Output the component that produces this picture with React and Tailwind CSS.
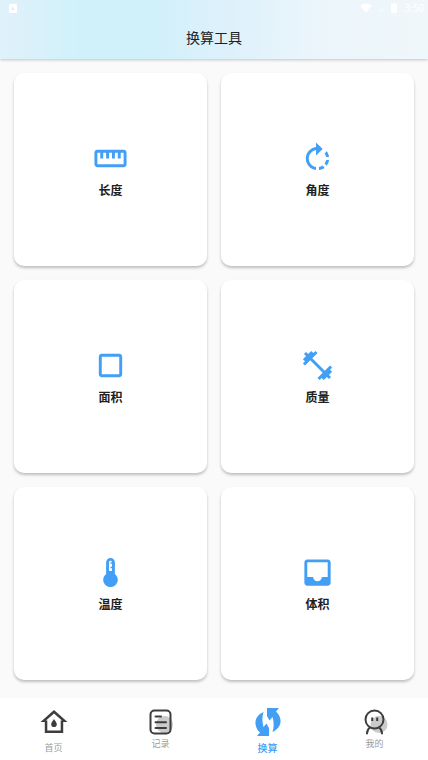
import React from "react";

const tools = [
  {
    label: "长度",
    path: "M21 6H3c-1.1 0-2 .9-2 2v8c0 1.1.9 2 2 2h18c1.1 0 2-.9 2-2V8c0-1.1-.9-2-2-2zm0 10H3V8h2v4h2V8h2v4h2V8h2v4h2V8h2v4h2V8h2v8z",
  },
  {
    label: "角度",
    path: "M15.55 5.55L11 1v3.07C7.06 4.56 4 7.92 4 12s3.05 7.44 7 7.93v-2.02c-2.84-.48-5-2.94-5-5.91s2.16-5.43 5-5.91V10l4.55-4.45zM19.93 11c-.17-1.39-.72-2.73-1.62-3.89l-1.42 1.42c.54.75.88 1.6 1.02 2.47h2.02zM13 17.9v2.02c1.39-.17 2.74-.71 3.9-1.61l-1.44-1.44c-.75.54-1.59.89-2.46 1.03zm3.89-2.42l1.42 1.41c.9-1.16 1.45-2.5 1.62-3.89h-2.02c-.14.87-.48 1.72-1.02 2.48z",
  },
  {
    label: "面积",
    path: "M18 4H6c-1.1 0-2 .9-2 2v12c0 1.1.9 2 2 2h12c1.1 0 2-.9 2-2V6c0-1.1-.9-2-2-2zm0 14H6V6h12v12z",
  },
  {
    label: "质量",
    path: "M20.57 14.86L22 13.43 20.57 12 17 15.57 8.43 7 12 3.43 10.57 2 9.14 3.43 7.71 2 5.57 4.14 4.14 2.71 2.71 4.14l1.43 1.43L2 7.71l1.43 1.43L2 10.57 3.43 12 7 8.43 15.57 17 12 20.57 13.43 22l1.43-1.43L16.29 22l2.14-2.14 1.43 1.43 1.43-1.43-1.43-1.43L22 16.29z",
  },
  {
    label: "温度",
    path: "M15 13V5c0-1.66-1.34-3-3-3S9 3.34 9 5v8c-1.21.91-2 2.37-2 4 0 2.76 2.24 5 5 5s5-2.24 5-5c0-1.63-.79-3.09-2-4zm-4-8c0-.55.45-1 1-1s1 .45 1 1h-1v1h1v2h-1v1h1v2h-2V5z",
  },
  {
    label: "体积",
    path: "M19 3H4.99c-1.11 0-1.98.9-1.98 2L3 19c0 1.1.88 2 1.99 2H19c1.1 0 2-.9 2-2V5c0-1.1-.9-2-2-2zm0 12h-4c0 1.66-1.35 3-3 3s-3-1.34-3-3H4.99V5H19v10z",
  },
];

function StatusBar() {
  return (
    <div className="flex h-4 items-center justify-between pl-2 pr-1 text-white">
      <svg className="h-2.5 w-2.5" viewBox="0 0 10 10" aria-hidden="true">
        <rect x="1" y="1" width="8" height="9" rx="1" fill="currentColor" />
        <path d="M5 3.5l1.6 3.5H3.4z" fill="#d8eef5" />
      </svg>
      <div className="flex items-center gap-1">
        <svg className="h-2.5 w-10" viewBox="0 0 40 10" fill="currentColor" aria-hidden="true">
          <path d="M-1 2.5Q5 -1.5 11 2.5L5 9.5z" />
          <path d="M16 9l6-6v6z" opacity=".3" />
          <path d="M30 1h2V0h2v1h2v9h-6z" />
        </svg>
        <span className="text-[10px] leading-4">3:50</span>
      </div>
    </div>
  );
}

function ToolCard({ label, path }) {
  return (
    <button
      type="button"
      className="flex aspect-square flex-col items-center justify-center gap-1 rounded-[10px] bg-white pt-0.5 shadow-[0_2px_3px_rgba(0,0,0,0.24)]"
    >
      <svg className="h-[35px] w-[35px] text-[#429ff5]" viewBox="0 0 24 24" fill="currentColor" aria-hidden="true">
        <path d={path} />
      </svg>
      <span className="text-xs leading-5 font-bold text-[#202020]">{label}</span>
    </button>
  );
}

function HomeIcon() {
  return (
    <svg className="h-7 w-7" viewBox="0 0 28 28" aria-hidden="true">
      <path d="M14 2L27.5 14H23.2V25H4.8V14H.5zM14 5.500L6 12.600H7.300V22.500H20.700V12.600H22z" fill="#3d3d3d" fillRule="evenodd" />
      <path d="M14 11c1.3 2 2.8 3.5 2.8 5.2a2.8 2.8 0 0 1-5.6 0c0-1.7 1.5-3.2 2.8-5.2z" fill="#3d3d3d" />
    </svg>
  );
}

function RecordIcon() {
  return (
    <svg className="h-7 w-7" viewBox="0 0 28 28" fill="none" aria-hidden="true">
      <circle cx="17.5" cy="16.5" r="8.5" fill="#cbcbcb" />
      <rect x="3.5" y="2.5" width="20" height="23" rx="4" stroke="#3d3d3d" strokeWidth="2" />
      <path d="M8.500 8.500h5.500M8.500 14.200h10.500M8.500 19.900h10.500" stroke="#3d3d3d" strokeWidth="2" strokeLinecap="round" />
    </svg>
  );
}

function ConvertIcon() {
  return (
    <svg className="h-7 w-7" viewBox="0 0 28 28" fill="#429ff5" aria-hidden="true">
      <path d="M9.500 4C8 8.500 8 14 9.500 19L12.500 15.500L15 20V28H3L6 24.500C-1 18 0 8 9.500 4z" />
      <path d="M18.500 24C20 19.500 20 14 18.500 9L15.500 12.500L13 8V0H25L22 3.500C29 10 28 20 18.500 24z" />
    </svg>
  );
}

function ProfileIcon() {
  return (
    <svg className="h-7 w-7" viewBox="0 0 28 28" fill="none" aria-hidden="true">
      <circle cx="18" cy="16.5" r="8.5" fill="#cbcbcb" />
      <circle cx="13.500" cy="11.500" r="9" stroke="#3d3d3d" strokeWidth="2" />
      <path d="M6 25.500c0-3 .8-4.500 3-6M21 25.500c0-3-.8-4.500-3-6" stroke="#3d3d3d" strokeWidth="2" strokeLinecap="round" />
      <path d="M11.200 9.500v3.500M16.200 9.500v3.500" stroke="#3d3d3d" strokeWidth="2" />
    </svg>
  );
}

function NavItem({ label, icon, active, className }) {
  return (
    <a
      href="#"
      aria-current={active ? "page" : undefined}
      className={`flex flex-1 flex-col items-center pt-2.5 ${className}`}
    >
      {icon}
      <span className={active ? "text-[10px] leading-3 font-medium text-[#429ff5]" : "text-[9px] leading-3 text-[#9b9b9b]"}>
        {label}
      </span>
    </a>
  );
}

export default function App() {
  return (
    <div className="flex min-h-screen flex-col bg-[#fafafa] font-['Noto_Sans_CJK_SC',sans-serif]">
      <header className="h-[59px] bg-[linear-gradient(91deg,#e0f1fa_0%,#d0f1fa_20%,#d0f0fa_34%,#def1fb_54%,#ecf5fb_75%,#eff7fa_100%)] shadow-[0_1px_3px_rgba(0,0,0,0.22)]">
        <StatusBar />
        <h1 className="pt-[11px] text-center text-sm leading-5 text-[#1c2226]">换算工具</h1>
      </header>
      <main className="grid flex-1 grid-cols-2 content-start gap-3.5 px-3.5 pt-3.5 pb-[18px]">
        {tools.map((tool) => (
          <ToolCard key={tool.label} label={tool.label} path={tool.path} />
        ))}
      </main>
      <nav className="flex h-[62px] bg-white">
        <NavItem label="首页" icon={<HomeIcon />} className="gap-1.5" />
        <NavItem label="记录" icon={<RecordIcon />} className="gap-0.5" />
        <NavItem label="换算" icon={<ConvertIcon />} active className="gap-1.5" />
        <NavItem label="我的" icon={<ProfileIcon />} className="gap-0.5" />
      </nav>
    </div>
  );
}
